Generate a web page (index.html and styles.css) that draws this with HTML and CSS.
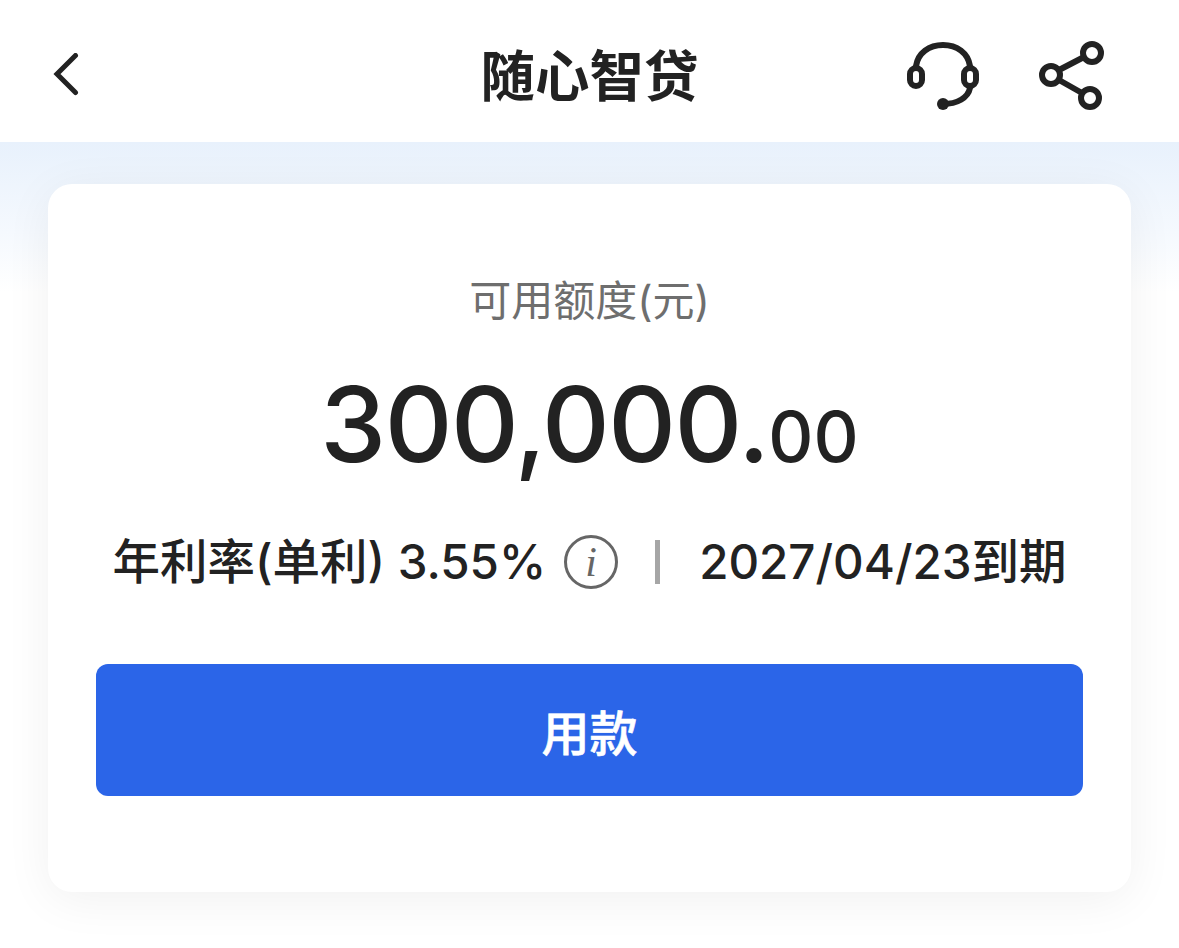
FILE: index.html
```html
<!DOCTYPE html>
<html lang="zh-CN">
<head>
<meta charset="utf-8">
<title>随心智贷</title>
<link rel="stylesheet" href="styles.css">
</head>
<body>
<header class="nav">
  <svg class="back" width="28" height="44" viewBox="0 0 28 44"><path d="M23.5 2.5 L5 21 L23.5 39.5" fill="none" stroke="#222" stroke-width="5" stroke-linecap="round" stroke-linejoin="miter"/></svg>
  <h1 class="title">随心智贷</h1>
  <div class="nav-icons">
    <svg width="74" height="70" viewBox="0 0 74 70"><g fill="none" stroke="#222" stroke-width="6" stroke-linecap="round"><path d="M9 26 C11 13 22 5 36 5 C50 5 61 13 63 26"/><rect x="3" y="28" width="12" height="18" rx="6"/><rect x="57" y="28" width="12" height="18" rx="6"/><path d="M63 48 C61 58 50 64 36 64"/></g><circle cx="36" cy="64" r="6" fill="#222"/></svg>
    <svg width="66" height="70" viewBox="0 0 66 70"><g fill="none" stroke="#222" stroke-width="6"><circle cx="53" cy="13" r="9"/><circle cx="12" cy="35" r="9"/><circle cx="51" cy="58" r="9"/><path d="M20 30 L45 17 M20 40 L43 53"/></g></svg>
  </div>
</header>
<main class="page">
  <section class="card">
    <div class="label">可用额度(元)</div>
    <div class="amount">300,000<span class="dot">.</span><span class="cents">00</span></div>
    <div class="meta">
      <span>年利率(单利) 3.55%</span>
      <span class="info">i</span>
      <span class="sep"></span>
      <span>2027/04/23到期</span>
    </div>
    <button class="cta">用款</button>
  </section>
</main>
</body>
</html>
```
FILE: styles.css
```css
* { box-sizing: border-box; }
html, body { margin: 0; padding: 0; }
body {
  width: 1179px;
  height: 948px;
  overflow: hidden;
  background: #fff;
  font-family: Inter, "Noto Sans CJK SC", sans-serif;
  color: #222;
}
.nav {
  height: 142px;
  background: #fff;
  display: flex;
  align-items: center;
  justify-content: space-between;
  padding: 14px 74px 6px 52px;
  position: relative;
}
.title {
  position: absolute;
  left: 0;
  right: 0;
  top: 43px;
  margin: 0;
  text-align: center;
  font-size: 54.5px;
  line-height: 66px;
  font-weight: 700;
  color: #222;
}
.back { display: block; }
.nav-icons { display: flex; align-items: center; gap: 58px; }
.nav-icons svg { display: block; }
.page {
  height: 806px;
  padding: 42px 48px 0;
  background: linear-gradient(#e8f1fc 0, #f5f9fe 90px, #fff 150px);
}
.card {
  height: 708px;
  background: #fff;
  border-radius: 24px;
  box-shadow: 0 8px 48px rgba(0, 0, 0, .06);
  padding: 88px 48px 0;
  display: flex;
  flex-direction: column;
  align-items: center;
}
.label {
  font-size: 42px;
  line-height: 58px;
  color: #6e6e6e;
}
.amount {
  font-size: 105px;
  line-height: 136px;
  font-weight: 550;
  margin-top: 26px;
  letter-spacing: -1.5px;
}
.cents { font-size: 70px; letter-spacing: 0; font-weight: 500; }
.meta {
  display: flex;
  align-items: center;
  font-size: 47.5px;
  line-height: 60px;
  font-weight: 550;
  margin-top: 27px;
  white-space: nowrap;
}
.info {
  width: 54px;
  height: 54px;
  border: 3px solid #666;
  border-radius: 50%;
  margin-left: 18px;
  display: flex;
  align-items: center;
  justify-content: center;
  font-family: "Liberation Serif", serif;
  font-style: italic;
  font-weight: 400;
  font-size: 42px;
  line-height: 1;
  color: #666;
}
.sep {
  width: 5px;
  height: 44px;
  background: #a6a6a6;
  margin: 0 39px 0 37px;
}
.cta {
  width: 987px;
  height: 132px;
  margin-top: 72px;
  border: 0;
  border-radius: 12px;
  background: #2b65e8;
  color: #fff;
  font-family: inherit;
  font-size: 48px;
  font-weight: 500;
  -webkit-text-stroke: .6px #fff;
}
```
